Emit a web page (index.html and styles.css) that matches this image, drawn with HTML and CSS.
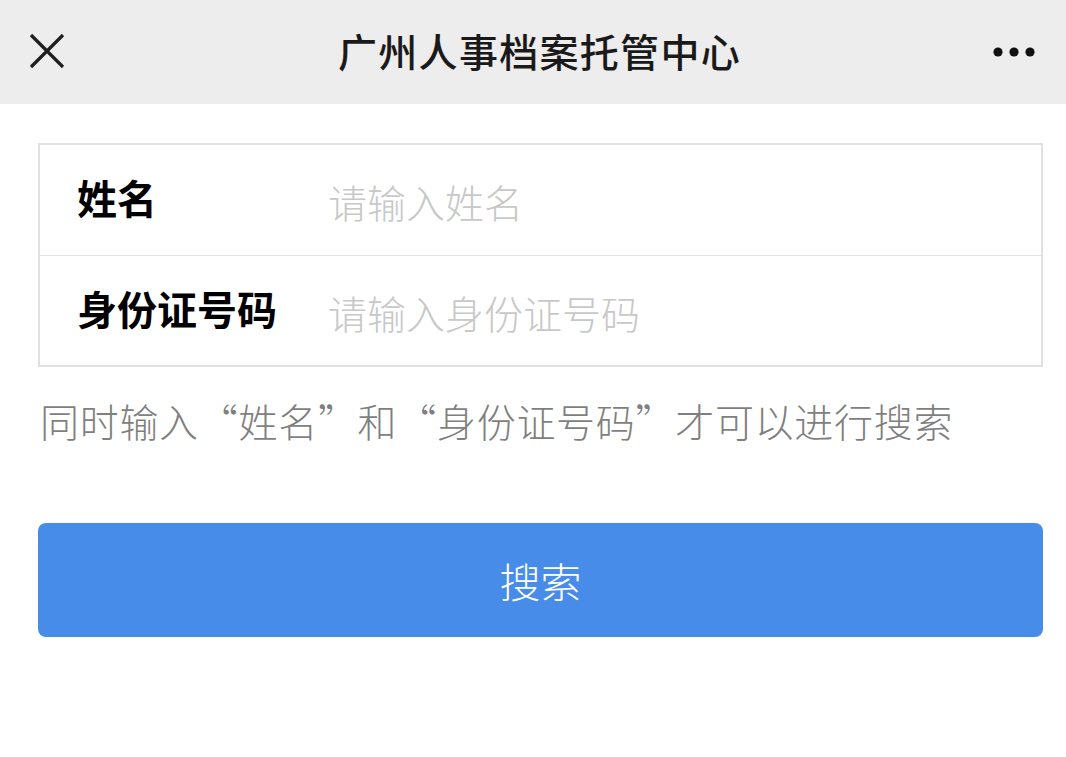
FILE: index.html
```html
<!DOCTYPE html>
<html lang="zh-CN">
<head>
<meta charset="utf-8">
<title>广州人事档案托管中心</title>
<link rel="stylesheet" href="styles.css">
</head>
<body>
<header class="navbar">
  <span class="nav-btn nav-close">
    <svg width="36" height="36" viewBox="0 0 36 36"><path d="M2 2 L34 34 M34 2 L2 34" stroke="#1f1f1f" stroke-width="3.2" fill="none"/></svg>
  </span>
  <h1 class="nav-title">广州人事档案托管中心</h1>
  <span class="nav-btn nav-more">
    <svg width="44" height="12" viewBox="0 0 44 12"><circle cx="6" cy="6" r="4.6" fill="#111"/><circle cx="22" cy="6" r="4.6" fill="#111"/><circle cx="38" cy="6" r="4.6" fill="#111"/></svg>
  </span>
</header>
<main class="content">
  <div class="form-box">
    <div class="form-row">
      <label class="form-label">姓名</label>
      <input class="form-input" type="text" placeholder="请输入姓名">
    </div>
    <div class="form-row">
      <label class="form-label">身份证号码</label>
      <input class="form-input" type="text" placeholder="请输入身份证号码">
    </div>
  </div>
  <p class="hint">同时输入“姓名”和“身份证号码”才可以进行搜索</p>
  <button class="search-btn" type="button">搜索</button>
</main>
</body>
</html>
```
FILE: styles.css
```css
* { box-sizing: border-box; }
html, body {
  margin: 0;
  padding: 0;
  background: #ffffff;
  font-family: "Noto Sans CJK SC", "Noto Sans", sans-serif;
}
.navbar {
  height: 104px;
  background: #ededed;
  display: flex;
  align-items: center;
  justify-content: space-between;
  padding: 0 30px 0 29px;
}
.nav-btn {
  display: flex;
  align-items: center;
  width: 44px;
}
.nav-close { margin-top: -2px; }
.nav-more { justify-content: flex-end; }
.nav-title {
  margin: -4px 0 0 14px;
  font-size: 39px;
  font-weight: 500;
  color: #1a1a1a;
  letter-spacing: 1.3px;
  line-height: 1;
}
.content {
  padding: 39px 23px 0 38px;
}
.form-box {
  border: 2px solid #e0e0e0;
  background: #fff;
}
.form-row {
  display: flex;
  align-items: center;
  height: 110px;
}
.form-row + .form-row {
  border-top: 1px solid #e5e5e5;
}
.form-label {
  width: 288px;
  padding-left: 37px;
  font-size: 40px;
  font-weight: 700;
  color: #000;
  margin-top: -6px;
}
.form-input {
  flex: 1;
  border: none;
  outline: none;
  background: transparent;
  font-family: inherit;
  font-size: 39px;
  font-weight: 300;
  color: #333;
  padding: 0;
  margin-top: 2px;
}
.form-input::placeholder {
  color: #c8c8c8;
}
.hint {
  margin: 27px 0 0 2px;
  font-size: 39px;
  font-weight: 300;
  color: #7f7f7f;
  line-height: 52px;
  letter-spacing: 0.7px;
}
.search-btn {
  display: block;
  width: 100%;
  height: 114px;
  margin-top: 77px;
  border: none;
  border-radius: 8px;
  background: #478ce8;
  color: #ffffff;
  font-family: inherit;
  font-size: 41px;
  font-weight: 300;
  padding: 0;
}
```
